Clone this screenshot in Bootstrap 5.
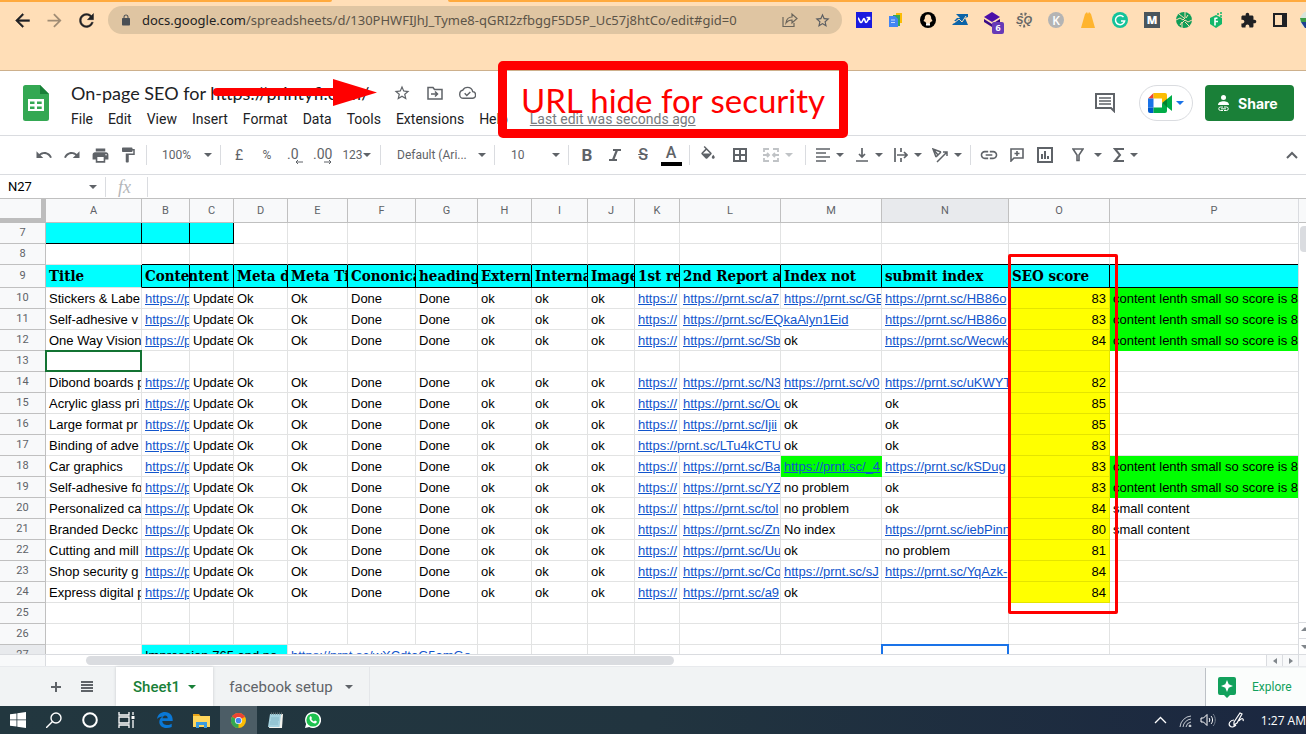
<!DOCTYPE html>
<html lang="en">
<head>
<meta charset="utf-8">
<meta name="viewport" content="width=device-width, initial-scale=1">
<title>On-page SEO - Google Sheets</title>
<link rel="stylesheet" href="https://cdn.jsdelivr.net/npm/bootstrap@5.3.0/dist/css/bootstrap.min.css">
<style>
  :root { --ink:#5f6368; --line:#dadce0; --grid:#e2e3e3; --head:#c0c0c0; --link:#1155cc; }
  body { font-family:Roboto, "Liberation Sans", sans-serif; color:#202124; background:#fff; font-size:14px; }
  button, a { color:inherit; }
  button { border:0; background:none; padding:0; }
  svg { display:block; flex:none; }
  .plain-ico { fill:currentColor; }

  .chrome-bar { background:#ffdeb7; height:71px; border-bottom:1px solid #cdb08c; }
  .strip { height:2px; }
  .strip .left-tabs { width:332px; background:#ffaa3e; border-bottom-right-radius:2px; }
  .strip .right-tabs { background:#ffaa3e; border-bottom-left-radius:2px; }
  .strip .open-tab { width:116px; }
  .nav-row { height:36px; padding-left:6px; }
  .slot { width:32px; height:28px; display:flex; align-items:center; justify-content:center; flex:none; }
  .omnibox { background:#dfc5a2; border-radius:14px; height:28px; margin:0 6px; }
  .omnibox input { border:0; background:none; outline:0; color:#5c5448; font:13px/20px "Noto Sans", sans-serif; }
  .host { color:#222; font:13px/20px "Noto Sans", sans-serif; margin-left:6px; }
  .count { right:-4px; bottom:-6px; background:#673ab7; color:#fff; font:700 9px/12px "Open Sans", sans-serif; width:12px; height:12px; border-radius:2px; }
  .avatar-slot { width:10px; height:28px; padding-left:4px; }

  .doc-head { height:65px; border-bottom:1px solid var(--line); padding-left:23px; padding-right:12px; }
  .doc-text { margin-left:22px; }
  .doc-title { font:18px/24px Lato, sans-serif; }
  .menu-row { font-size:14px; line-height:20px; gap:15px; }
  .menu-row a { text-decoration:none; }
  .edited { color:#777b80; margin-left:7px; }
  .menu-row .edited { text-decoration:underline; }
  .meet { width:54px; height:36px; border:1px solid var(--line); border-radius:18px; }
  .share-btn { width:89px; height:36px; background:#1a8038; color:#fff; border-radius:4px; font:700 14px Inter, sans-serif; }
  .strike-arrow { left:142px; top:-2px; }
  .note { left:498px; top:61px; width:350px; height:77px; border:9px solid #f00; border-radius:5px; color:#f00; font:33px/60px Lato, sans-serif; }

  .tri { width:0; height:0; border:4px solid transparent; border-top-color:currentColor; border-bottom:0; flex:none; }
  .tool-row { height:39px; border-bottom:1px solid var(--line); color:var(--ink); padding-left:30px; font-size:12px; }
  .tb { width:28px; height:28px; display:flex; align-items:center; justify-content:center; flex:none; }
  .tb.wide { width:39px; gap:6px; }
  .rule { width:1px; height:20px; background:var(--line); flex:none; margin:0 4px; }
  .pick { border:0; appearance:none; color:var(--ink); font:12px/20px Roboto, sans-serif; flex:none;
    background:url("data:image/svg+xml,%3Csvg xmlns='http://www.w3.org/2000/svg' width='8' height='4'%3E%3Cpath d='M0 0h8L4 4z' fill='%235f6368'/%3E%3C/svg%3E") no-repeat right 4px center; padding:0; }
  .pick.zoom { width:54px; margin-left:11px; }
  .pick.face { width:93px; margin-left:12px; }
  .pick.size { width:53px; margin-left:12px; }
  .tb b { font-size:17px; line-height:18px; }
  .text-color { border-bottom:4px solid #000; width:21px; font:500 16px/18px Roboto, sans-serif; height:22px; }

  .formula-row { height:23px; font-size:13px; }
  .formula-row input { border:0; outline:0; background:none; }
  .name-box { width:81px; margin-left:8px; color:#000; font:13px Roboto, sans-serif; }
  .fx { color:#b4b6b9; font:italic 18px/20px "Liberation Serif", serif; }

  .sheet-area { border-top:1px solid var(--head); min-height:0; }
  .sheet { table-layout:fixed; width:100%; border-collapse:separate; border-spacing:0; font:13px/20px "Liberation Sans", sans-serif; color:#000; }
  .sheet td, .sheet th { border:0 solid var(--grid); border-width:0 1px 1px 0; padding:0; height:21px; }
  .sheet td:last-child, .sheet thead th:last-child { border-right-width:0; }
  .sheet td > div { overflow:hidden; white-space:nowrap; padding:1px 0 0 3px; height:20px; }
  .sheet thead th { height:24px; background:#f8f9fa; border-color:var(--head); text-align:center; font:11px/23px Roboto, sans-serif; color:var(--ink); }
  .sheet thead th:last-child { padding-left:20px; }
  .sheet tbody th { background:#f8f9fa; border-color:var(--head); font:11px/20px Roboto, sans-serif; color:var(--ink); text-align:center; }
  .sheet thead th.corner { border-right:5px solid #bdbdbd; border-bottom:5px solid #bdbdbd; }
  .sheet .picked { background:#e8eaed !important; }
  .sheet a { color:var(--link); }
  .sheet .cyan { background:#0ff; }
  .sheet .lime { background:#0f0; border-color:#0f0; }
  .sheet .sun { background:#ff0; border-color:#e4e400; }
  .sheet .sun > div { text-align:right; padding-right:3px; }
  .sheet .ink { border-color:#000; }
  .sheet .ink-b { border-bottom-color:#000; }
  .sheet .ink-r { border-right-color:#000; }
  .sheet .titles td { font:700 15px/22px "DejaVu Serif Condensed", "DejaVu Serif", serif; font-stretch:condensed; height:23px; }
  .sheet .titles td > div { height:22px; padding-top:0; }
  .sheet .boxed { position:relative; }
  .sheet .boxed::after { content:""; position:absolute; inset:-1px; border:2px solid #137333; }
  .sheet .boxed.blue::after { border-color:#1a73e8; }
  .score-frame { left:1008px; top:55px; width:110px; height:360px; border:3px solid #f00; border-radius:2px; z-index:2; }
  .vbar { width:8px; border-left:1px solid var(--line); }
  .vbar .cap { height:24px; background:#f8f9fa; border-bottom:1px solid var(--head); }
  .vbar .thumb { height:26px; background:#dadce0; border-radius:4px 0 0 4px; margin:3px 0 0 1px; }
  .vbar .step { height:16px; border-top:1px solid var(--line); color:#80868b; }
  .hbar { height:13px; border-top:1px solid var(--line); border-bottom:1px solid #e8eaed; }
  .hbar .stub { width:46px; background:#f8f9fa; border-right:1px solid var(--line); }
  .hbar .thumb { width:45%; margin-left:40px; height:9px; background:#dadce0; border-radius:5px; }
  .hbar .step { width:16px; border-left:1px solid var(--line); color:#80868b; background:#f8f9fa; }
  .hbar .step.last { width:8px; }

  .tab-row { height:39px; background:#f1f3f4; color:var(--ink); padding-left:40px; }
  .tab-row .tool { width:31px; }
  .sheet-tab { font:500 15px Roboto, sans-serif; height:39px; }
  .sheet-tab.on { background:#fff; color:#188038; width:97px; margin-left:14px; box-shadow:0 0 3px #c8cacc; }
  .sheet-tab.off { width:157px; border-right:1px solid #e4e6e9; font-weight:400; }
  .explore { width:101px; border-left:1px solid #bdc1c6; background:#fbfdfc; color:#12a15c; font-size:12px; height:38px; margin-top:1px; }

  .task-row { height:28px; background:linear-gradient(90deg,#22373f,#21343f 50%,#1b2740); color:#fff; }
  .ti { width:36px; height:28px; display:flex; align-items:center; justify-content:center; flex:none; }
  .ti.view { margin-right:2px; }
  .ti.app { width:37px; }
  .ti.on { background:#4c5d66; }
  .clock { font:12px "Open Sans", sans-serif; }
</style>
</head>
<body>
<div class="d-flex flex-column vh-100 overflow-hidden position-relative">

  <header class="chrome-bar flex-shrink-0">
    <div class="strip d-flex"><div class="left-tabs"></div><div class="open-tab"></div><div class="right-tabs flex-fill"></div></div>
    <div class="nav-row d-flex align-items-center">
      <button class="slot" aria-label="Back"><svg class="plain-ico" width="21" height="21" viewBox="0 0 24 24"><path d="M20 11H7.83l5.59-5.59L12 4l-8 8 8 8 1.41-1.41L7.83 13H20v-2z" stroke="currentColor" stroke-width=".5"/></svg></button>
      <button class="slot" aria-label="Forward" style="color:#a08c74"><svg class="plain-ico" width="21" height="21" viewBox="0 0 24 24"><path d="M4 11h12.17l-5.59-5.59L12 4l8 8-8 8-1.41-1.41L16.17 13H4v-2z"/></svg></button>
      <button class="slot" aria-label="Reload"><svg class="plain-ico" width="21" height="21" viewBox="0 0 24 24"><path d="M17.65 6.35C16.2 4.9 14.21 4 12 4c-4.42 0-7.99 3.58-7.99 8s3.57 8 7.99 8c3.73 0 6.84-2.55 7.73-6h-2.08c-.82 2.33-3.04 4-5.65 4-3.31 0-6-2.69-6-6s2.69-6 6-6c1.66 0 3.14.69 4.22 1.78L13 11h7V4l-2.35 2.35z" stroke="currentColor" stroke-width=".5"/></svg></button>
      <div class="omnibox flex-fill d-flex align-items-center ps-2 pe-1">
        <svg class="mx-1" width="12" height="12" viewBox="0 0 20 24" fill="#4a4f54"><path fill-rule="evenodd" d="M16 8h-1V6c0-2.760-2.240-5-5-5S5 3.240 5 6v2H4c-1.100 0-2 .900-2 2v11c0 1.100.900 2 2 2h12c1.100 0 2-.900 2-2V10c0-1.100-.900-2-2-2zM7 8V6c0-1.660 1.340-3 3-3s3 1.340 3 3v2H7z"/></svg>
        <span class="host">docs.google.com</span>
        <input class="flex-fill p-0" type="text" aria-label="Address" value="/spreadsheets/d/130PHWFIJhJ_Tyme8-qGRI2zfbggF5D5P_Uc57j8htCo/edit#gid=0">
        <button class="slot" aria-label="Share page"><svg width="16" height="16" viewBox="0 0 16 16" fill="none" stroke="#6b655b" stroke-width="1.200"><path d="M1 5v9.500h11V11M4 11c.500-4 3-6 6-6V2l5 4.500L10 11V8C7.500 8 5.500 9 4 11z"/></svg></button>
        <button class="slot" aria-label="Bookmark"><svg width="17" height="17" viewBox="0 0 24 24" fill="#5b5e62"><path d="M22 9.240l-7.190-.620L12 2 9.190 8.630 2 9.240l5.460 4.730L5.820 21 12 17.270 18.180 21l-1.630-7.030L22 9.240zM12 15.400l-3.760 2.270 1-4.280-3.320-2.880 4.380-.380L12 6.100l1.710 4.040 4.380.380-3.320 2.880 1 4.280L12 15.400z"/></svg></button>
      </div>
      <div class="slot"><svg width="16" height="16"><path fill="#1a1adf" d="M0 0h16v16H0z"/><path d="M2 6c1 0 1.500 4.500 3 4.500S7 6.500 8 6.500s1 4 2 4 1.500-2 3.500-5M10.500 5.500h3V8" fill="none" stroke="#fff" stroke-width="1.600"/></svg></div>
      <div class="slot"><svg width="16" height="16"><path fill="#fbbc04" d="M8 1h6v10H8z"/><path fill="#34a853" d="M5 3h7v11H5z"/><path fill="#4285f4" d="M1 4h6l3 3v8H1z"/><path d="M3 8h4M3 10.500h4" stroke="#c5dafc"/></svg></div>
      <div class="slot"><svg width="16" height="16"><circle cx="8" cy="8" r="8"/><path fill="#ffdeb7" d="M8 2.500c2.500 0 3.300 1.800 3.200 4l1.300 2.500-2 1-1 2h-3l-1-2-2-1 1.300-2.500c-.100-2.200.700-4 3.200-4z"/><path d="M6 12.500h4" stroke="#fff" stroke-width="2"/></svg></div>
      <div class="slot"><svg width="16" height="16"><path fill="#0b63a8" d="M4 2h12v3l-3 1 3 7H0l4-4H2l3-3h3z"/><path d="M2 11l5-4 3 3 4-6" stroke="#ffdeb7" fill="none"/></svg></div>
      <div class="slot"><div class="position-relative"><svg width="16" height="16"><path fill="#4b0fa8" d="M8 0l8 5-8 5-8-5z"/><path fill="#3a0b86" d="M0 7l8 5 8-5v3l-8 5-8-5z"/></svg><span class="count position-absolute text-center">6</span></div></div>
      <div class="slot"><svg width="18" height="18" viewBox="0 0 18 18"><circle cx="9" cy="9" r="6" fill="none" stroke="#6b6b6b" stroke-width="3" stroke-dasharray="2 2"/><text x="9" y="13" font-family="Liberation Sans" font-weight="700" font-style="italic" font-size="11" text-anchor="middle" fill="#666" stroke="#ffdeb7" stroke-width="2" paint-order="stroke">SQ</text></svg></div>
      <div class="slot"><svg width="16" height="16"><circle cx="8" cy="8" r="8" fill="#b4b4b4"/><text x="8" y="12.500" font-family="Open Sans" font-weight="600" font-size="12" text-anchor="middle" fill="#fff">K</text></svg></div>
      <div class="slot"><svg width="16" height="16"><path fill="#ffb42e" d="M1 16L5 2l2-2 1 2 1-2 2 2 4 14z"/></svg></div>
      <div class="slot"><svg width="16" height="16"><circle cx="8" cy="8" r="8" fill="#15c39a"/><path d="M11.500 5A4.600 4.600 0 1 0 12.600 9H9" fill="none" stroke="#fff" stroke-width="1.500"/></svg></div>
      <div class="slot"><svg width="16" height="16"><path fill="#4a555c" d="M0 0h16v16H0z"/><text x="8" y="12" font-family="Open Sans" font-weight="800" font-size="11" text-anchor="middle" fill="#fff">M</text></svg></div>
      <div class="slot"><svg width="16" height="16"><circle cx="8" cy="8" r="8" fill="#0f9d58"/><path d="M0 8l4-2 3 2 2-2V0M16 8l-4 2-3-2-3 3v5M3 2l5 4M13 14l-4-4M12 3l-2 3M4 13l2-3" fill="none" stroke="#ffdeb7"/></svg></div>
      <div class="slot"><svg width="16" height="16"><path fill="#12b76a" d="M2 6l6-3 6 3v6l-6 4-6-4z"/><path d="M9.500 6L7 6.500v7M7 9.500h3" fill="none" stroke="#fff" stroke-width="1.600"/><path d="M9 2h2M12 1h2M12 4h2" stroke="#12b76a" stroke-width="1.500"/></svg></div>
      <div class="slot"><svg class="plain-ico" width="17" height="17" viewBox="0 0 24 24"><path d="M20.500 11H19V7c0-1.100-.900-2-2-2h-4V3.500C13 2.120 11.880 1 10.500 1S8 2.120 8 3.500V5H4c-1.100 0-1.990.900-1.990 2v3.800H3.500c1.490 0 2.700 1.210 2.700 2.700s-1.210 2.700-2.700 2.700H2V20c0 1.100.900 2 2 2h3.800v-1.500c0-1.490 1.210-2.700 2.700-2.700 1.490 0 2.700 1.210 2.700 2.700V22H17c1.100 0 2-.900 2-2v-4h1.500c1.380 0 2.500-1.120 2.500-2.500S21.880 11 20.500 11z"/></svg></div>
      <div class="slot"><svg width="14" height="14"><path fill="none" stroke="#202124" stroke-width="2" d="M1 1h12v12H1z"/><path fill="#202124" d="M9 1h4v12H9z"/></svg></div>
      <div class="avatar-slot d-flex align-items-center overflow-hidden"><svg width="18" height="18"><circle cx="9" cy="9" r="9" fill="#d8e4dc"/><path d="M0 7h18v4H1z" fill="#3b9b45"/><path d="M1 11h16l-4 6H5z" fill="#1e3f8f"/></svg></div>
    </div>
  </header>

  <section class="doc-head d-flex align-items-center flex-shrink-0">
    <svg width="26" height="36" viewBox="0 0 26 36"><path fill="#34a853" d="M2.500 0H17l9 9v24.500a2.500 2.500 0 0 1-2.500 2.500h-21A2.500 2.500 0 0 1 0 33.500v-31A2.500 2.500 0 0 1 2.500 0z"/><path fill="#188038" d="M17 0l9 9h-9z"/><path fill="#fff" fill-rule="evenodd" d="M5 14h16v12H5zM7 16.500v2.500h4.500v-2.500zM14 16.500v2.500h4.700v-2.500zM7 21.500v2.500h4.500v-2.500zM14 21.500v2.500h4.700v-2.500z"/></svg>
    <div class="doc-text pt-1">
      <div class="d-flex align-items-center">
        <div class="doc-title position-relative text-nowrap">On-page SEO for https://printyfi.com/
          <svg class="strike-arrow position-absolute" width="164" height="28" fill="#f00"><rect y="9" width="126" height="8" rx="4"/><path d="M120 0l44 13.500L120 27z"/></svg>
        </div>
        <div class="d-flex gap-3 ps-4" style="color:#5f6368">
          <svg class="plain-ico" width="18" height="18" viewBox="0 0 24 24"><path d="M22 9.240l-7.190-.620L12 2 9.190 8.630 2 9.240l5.460 4.730L5.820 21 12 17.270 18.180 21l-1.630-7.030L22 9.240zM12 15.400l-3.760 2.270 1-4.280-3.320-2.880 4.380-.380L12 6.100l1.710 4.040 4.380.380-3.320 2.880 1 4.280L12 15.400z"/></svg>
          <svg width="16" height="18" viewBox="0 0 16 18" fill="none" stroke="currentColor" stroke-width="1.500"><path d="M1 3.500h5l1.500 2H15V15H1zM4 10h6M8 7.500l2.500 2.500L8 12.500"/></svg>
          <svg width="17" height="18" viewBox="0 0 24 24" fill="none" stroke="currentColor" stroke-width="2"><path d="M19.350 10.040C18.670 6.590 15.640 4 12 4 9.110 4 6.600 5.640 5.350 8.040 2.800 8.400 1 10.910 1 14c0 3 2.300 5.500 5 5.500h13c2.300 0 4.500-2 4.500-4.500 0-2.640-1.800-4.800-4.150-4.960zM8 12.500l3 3 5-5"/></svg>
        </div>
      </div>
      <nav class="menu-row d-flex mt-1">
        <a href="#">File</a><a href="#">Edit</a><a href="#">View</a><a href="#">Insert</a><a href="#">Format</a><a href="#">Data</a><a href="#">Tools</a><a href="#">Extensions</a><a href="#">Help</a>
        <a href="#" class="edited">Last edit was seconds ago</a>
      </nav>
    </div>
    <div class="ms-auto d-flex align-items-center">
      <button class="me-4" aria-label="Comments"><svg width="20" height="20" viewBox="0 0 20 20" fill="none" stroke="#5f6368" stroke-width="2"><path d="M1 1h18v17l-3-3H1z"/><path d="M4 5h12M4 8h12M4 11h12" stroke-width="1.500"/></svg></button>
      <button class="meet d-flex align-items-center justify-content-center gap-1 me-2" aria-label="Meet" style="color:#1a73e8">
        <svg width="24" height="20" viewBox="0 0 24 20"><path fill="#ea4335" d="M0 5.500L5.500 0v5.500z"/><path fill="#fbbc04" d="M5.500 0H17a2 2 0 0 1 2 2v5l-5 3V5.500H5.500z"/><path fill="#1a73e8" d="M0 5.500h5.500v9H0z"/><path fill="#0059c9" d="M0 14.500h5.500V20H2a2 2 0 0 1-2-2z"/><path fill="#00ac47" d="M5.500 14.500H14V10l5 3v5a2 2 0 0 1-2 2H5.500z"/><path fill="#00832d" d="M14 10l5-4v8z"/><path fill="#00ac47" d="M19 6l5-4v16l-5-4z"/></svg>
        <span class="tri"></span>
      </button>
      <button class="share-btn d-flex align-items-center gap-2 ps-2 ms-1"><svg class="ms-1" width="13" height="17" viewBox="0 0 13 17" fill="#fff"><circle cx="6.500" cy="2.500" r="2.500"/><path d="M1 10c0-3 3-3.800 5.500-3.800S12 7 12 10z"/><path d="M6 12H3.500a1.700 1.700 0 0 0 0 3.500H6M7 12h2.500a1.700 1.700 0 0 1 0 3.500H7M4 13.800h5" fill="none" stroke="#fff"/></svg>Share</button>
    </div>
  </section>

  <div class="tool-row d-flex align-items-center flex-shrink-0" role="toolbar">
    <button class="tb" aria-label="Undo"><svg class="plain-ico" width="18" height="18" viewBox="0 0 24 24"><path d="M12.500 8c-2.650 0-5.050.990-6.900 2.600L2 7v9h9l-3.620-3.620c1.390-1.160 3.160-1.880 5.120-1.880 3.540 0 6.550 2.310 7.600 5.500l2.370-.780C21.080 11.030 17.150 8 12.500 8z"/></svg></button>
    <button class="tb" aria-label="Redo"><svg class="plain-ico" width="18" height="18" viewBox="0 0 24 24"><path d="M18.400 10.600C16.550 8.990 14.150 8 11.500 8c-4.650 0-8.580 3.030-9.960 7.220L3.900 16c1.050-3.190 4.050-5.500 7.600-5.500 1.950 0 3.730.720 5.120 1.880L13 16h9V7l-3.600 3.600z"/></svg></button>
    <button class="tb" aria-label="Print"><svg class="plain-ico" width="19" height="19" viewBox="0 0 24 24"><path d="M19 8H5c-1.660 0-3 1.340-3 3v6h4v4h12v-4h4v-6c0-1.660-1.340-3-3-3zm-3 11H8v-5h8v5zm3-7c-.550 0-1-.450-1-1s.450-1 1-1 1 .450 1 1-.450 1-1 1zm-1-9H6v4h12V3z"/></svg></button>
    <button class="tb" aria-label="Paint format"><svg class="plain-ico" width="18" height="18" viewBox="0 0 24 24"><path d="M18 4V3c0-.550-.450-1-1-1H5c-.550 0-1 .450-1 1v4c0 .550.450 1 1 1h12c.550 0 1-.450 1-1V6h1v4H9v11c0 .550.450 1 1 1h2c.550 0 1-.450 1-1v-9h8V4h-3z"/></svg></button>
    <span class="rule"></span>
    <select class="pick zoom" aria-label="Zoom"><option>100%</option></select>
    <span class="rule"></span>
    <button class="tb" aria-label="Currency"><span style="font-size:14px">£</span></button>
    <button class="tb">%</button>
    <button class="tb" aria-label="Fewer decimals"><svg width="18" height="18"><text x="1" y="13" font-size="14" fill="currentColor">.0</text><path d="M17 16h-7M12 14l-2 2 2 2" fill="none" stroke="currentColor"/></svg></button>
    <button class="tb" aria-label="More decimals"><svg width="20" height="18"><text x="0" y="13" font-size="14" fill="currentColor">.00</text><path d="M11 16h7M16 14l2 2-2 2" fill="none" stroke="currentColor"/></svg></button>
    <button class="tb wide" aria-label="More formats"><span class="d-flex align-items-center">123<span class="tri"></span></span></button>
    <span class="rule"></span>
    <select class="pick face" aria-label="Font"><option>Default (Ari...</option></select>
    <span class="rule"></span>
    <select class="pick size" aria-label="Font size"><option>10</option></select>
    <span class="rule"></span>
    <button class="tb" aria-label="Bold"><b>B</b></button>
    <button class="tb" aria-label="Italic"><svg width="12" height="12" fill="none" stroke="currentColor" stroke-width="2.200"><path d="M4 1h8M0 11h8M8 1L4 11"/></svg></button>
    <button class="tb" aria-label="Strikethrough"><s style="font:500 16px/18px Roboto">S</s></button>
    <button class="tb" aria-label="Text colour"><span class="text-color">A</span></button>
    <span class="rule"></span>
    <button class="tb" aria-label="Fill colour"><svg class="plain-ico" width="18" height="18" viewBox="0 0 24 24"><path d="M16.560 8.940L7.620 0 6.210 1.410l2.380 2.380-5.150 5.150c-.590.590-.590 1.540 0 2.120l5.500 5.500c.290.290.680.440 1.060.440s.770-.150 1.060-.440l5.500-5.500c.590-.580.590-1.530 0-2.120zM5.210 10L10 5.210 14.790 10H5.210zM19 11.500s-2 2.170-2 3.500c0 1.100.900 2 2 2s2-.900 2-2c0-1.330-2-3.500-2-3.500z"/></svg></button>
    <button class="tb ms-1" aria-label="Borders"><svg width="14" height="14" fill="none" stroke="currentColor" stroke-width="2"><path d="M1 1h12v12H1zM7 1v12M1 7h12"/></svg></button>
    <button class="tb wide ms-1" aria-label="Merge cells" style="color:#c0c3c6"><svg width="16" height="14" fill="none" stroke="currentColor" stroke-width="1.800"><path d="M6 1H1v3M1 10v3h5M10 1h5v3M15 10v3h-5M0 7h6M16 7h-6M4 5l2 2-2 2M12 5l-2 2 2 2"/></svg><span class="tri"></span></button>
    <span class="rule ms-2"></span>
    <button class="tb wide" aria-label="Horizontal align"><svg width="14" height="14" stroke="currentColor" stroke-width="1.700"><path d="M0 1h14M0 5h10M0 9h14M0 13h10"/></svg><span class="tri"></span></button>
    <button class="tb wide" aria-label="Vertical align"><svg width="14" height="16" fill="none" stroke="currentColor" stroke-width="1.700"><path d="M1 14h12M7 1v9M4 7l3 3 3-3"/></svg><span class="tri"></span></button>
    <button class="tb wide" aria-label="Wrap"><svg width="14" height="16" fill="none" stroke="currentColor" stroke-width="1.700"><path d="M1 1v14M7 1v4M7 11v4M3 8h10M10 5l3 3-3 3"/></svg><span class="tri"></span></button>
    <button class="tb wide" aria-label="Rotate"><svg width="16" height="15" fill="none" stroke="currentColor" stroke-width="1.500"><path d="M4 9L1 1l8 3M1 1l5 6M5 14L15 4M11 4h4v4M4 9l5-5"/></svg><span class="tri"></span></button>
    <span class="rule"></span>
    <button class="tb" aria-label="Link"><svg class="plain-ico" width="20" height="20" viewBox="0 0 24 24"><path d="M3.900 12c0-1.710 1.390-3.100 3.100-3.100h4V7H7c-2.760 0-5 2.240-5 5s2.240 5 5 5h4v-1.900H7c-1.710 0-3.100-1.390-3.100-3.100zM8 13h8v-2H8v2zm9-6h-4v1.900h4c1.710 0 3.100 1.390 3.100 3.100s-1.390 3.100-3.100 3.100h-4V17h4c2.760 0 5-2.240 5-5s-2.240-5-5-5z"/></svg></button>
    <button class="tb" aria-label="Comment"><svg width="14" height="14" fill="none" stroke="currentColor" stroke-width="1.600"><path d="M1 13V1h12v9H4zM7 3v5M4.500 5.500h5"/></svg></button>
    <button class="tb" aria-label="Chart"><svg width="16" height="16" fill="none" stroke="currentColor" stroke-width="2"><path d="M1 1h14v14H1zM5 7v5M8 4v8M11 9v3"/></svg></button>
    <button class="tb wide ms-2" aria-label="Filter"><svg width="12" height="14" fill="none" stroke="currentColor" stroke-width="1.600"><path d="M1 1h10L7 7v5.500H5V7z"/></svg><span class="tri ms-1"></span></button>
    <button class="tb wide" aria-label="Functions"><svg width="11" height="14" fill="none" stroke="currentColor" stroke-width="2"><path d="M11 1H2l5 6-5 6h9"/></svg><span class="tri"></span></button>
    <button class="tb ms-auto" aria-label="Hide menus"><svg width="12" height="8" fill="none" stroke="currentColor" stroke-width="2"><path d="M1 7l5-5 5 5"/></svg></button>
  </div>

  <div class="formula-row d-flex align-items-center flex-shrink-0">
    <input class="name-box p-0" type="text" aria-label="Name box" value="N27">
    <span class="tri" style="color:#5f6368"></span>
    <span class="rule me-0 ms-2"></span>
    <span class="fx ps-2 ms-1">fx</span>
    <span class="rule ms-3"></span>
    <input class="flex-fill" type="text" aria-label="Formula">
  </div>

  <main class="sheet-area d-flex flex-fill position-relative overflow-hidden">
    <div class="flex-fill overflow-hidden">
      <table class="sheet">
        <colgroup id="cols"></colgroup>
        <thead><tr id="letters"></tr></thead>
        <tbody id="cells"></tbody>
      </table>
    </div>
    <div class="vbar d-flex flex-column flex-shrink-0 overflow-hidden">
      <div class="cap"></div><div class="thumb"></div>
      <div class="step mt-auto"><svg width="7" height="15"><path d="M2 8l4-4 4 4z" fill="currentColor"/></svg></div>
      <div class="step"><svg width="7" height="15"><path d="M2 6l4 4 4-4z" fill="currentColor"/></svg></div>
    </div>
    <div class="score-frame position-absolute"></div>
  </main>

  <div class="hbar d-flex flex-shrink-0">
    <div class="stub"></div><div class="thumb align-self-center"></div>
    <div class="step ms-auto d-flex align-items-center justify-content-center"><svg width="4" height="6"><path d="M4 0v6L0 3z" fill="currentColor"/></svg></div>
    <div class="step d-flex align-items-center justify-content-center"><svg width="4" height="6"><path d="M0 0v6l4-3z" fill="currentColor"/></svg></div>
    <div class="step last"></div>
  </div>

  <footer class="tab-row d-flex flex-shrink-0">
    <button class="tool" aria-label="Add sheet"><svg class="mx-auto" width="10" height="10" stroke="currentColor" stroke-width="2"><path d="M5 0v10M0 5h10"/></svg></button>
    <button class="tool" aria-label="All sheets"><svg class="mx-auto" width="12" height="12" stroke="currentColor" stroke-width="2"><path d="M0 1h12M0 4h12M0 7h12M0 10h12"/></svg></button>
    <button class="sheet-tab on d-flex align-items-center justify-content-center gap-2">Sheet1 <span class="tri"></span></button>
    <button class="sheet-tab off d-flex align-items-center justify-content-center gap-2">facebook setup <span class="tri ms-1"></span></button>
    <button class="explore ms-auto d-flex align-items-center gap-3 ps-2"><svg class="ms-1" width="18" height="21"><path fill="#12a15c" d="M2 0h14a2 2 0 0 1 2 2v14a2 2 0 0 1-2 2h-4l-3 3-3-3H2a2 2 0 0 1-2-2V2a2 2 0 0 1 2-2z"/><path fill="#fff" d="M9 3l1.700 4.300L15 9l-4.300 1.700L9 15l-1.700-4.300L3 9l4.300-1.700z"/></svg>Explore</button>
  </footer>

  <div class="task-row d-flex align-items-center flex-shrink-0">
    <button class="ti" aria-label="Start"><svg width="16" height="16" fill="#fff"><path d="M0 2.300l6.500-.900v6.100H0zM7.300 1.300L16 0v7.500H7.300zM0 8.300h6.500v6.300L0 13.700zM7.300 8.300H16V16l-8.700-1.200z"/></svg></button>
    <button class="ti" aria-label="Search"><svg width="16" height="16" fill="none" stroke="#fff" stroke-width="1.400"><circle cx="10" cy="6" r="5"/><path d="M6.500 9.500L0 16"/></svg></button>
    <button class="ti" aria-label="Cortana"><svg width="16" height="16" fill="none" stroke="#fff" stroke-width="2"><circle cx="8" cy="8" r="6.800"/></svg></button>
    <button class="ti view" aria-label="Task view"><svg width="17" height="16" fill="none" stroke="#fff" stroke-width="1.300"><path d="M1 0v3h10V0M1 16v-3h10v3M1 5h10v6H1zM15 0v3M15 8v8"/><path d="M13.500 4h3v3h-3z" fill="#fff" stroke="none"/></svg></button>
    <button class="ti app" aria-label="Edge"><svg width="16" height="16"><path fill="#0a78d6" d="M0 7C.600 2.500 4 0 8 0c5 0 8 3.500 7.700 9H5.300c.200 3 2.700 4 5 4 1.700 0 3-.400 4.400-1.200V15c-1.500.700-3.300 1-5 1C5 16 2.300 13.300 2.300 10c0-2.500 1.400-4.500 3.500-5.600C3.500 4.600 1.300 5.500 0 7zM5.500 6.300h5.200C10.700 4.500 9.800 3.400 8.200 3.400 6.600 3.400 5.700 4.800 5.500 6.300z"/></svg></button>
    <button class="ti app" aria-label="Files"><svg width="17" height="15"><path fill="#e8a317" d="M0 1h6l1.500 2H0z"/><path fill="#ffd65c" d="M0 3h17v11H0z"/><path fill="#3a9be0" d="M3 15V9h11v6h-3v-3H6v3z"/></svg></button>
    <button class="ti app on" aria-label="Chrome"><svg width="15" height="15" viewBox="0 0 16 16"><circle cx="8" cy="8" r="8" fill="#fbbc04"/><path fill="#ea4335" d="M8 8L1.070 4A8 8 0 0 1 14.930 4z"/><path fill="#34a853" d="M8 8v8A8 8 0 0 1 1.070 4z"/><circle cx="8" cy="8" r="3.800" fill="#fff"/><circle cx="8" cy="8" r="3" fill="#4285f4"/></svg></button>
    <button class="ti app" aria-label="Notepad"><svg width="15" height="17"><path fill="#f3f3ee" d="M3 2h12l-1 14H1z"/><path fill="#a5d2df" d="M2 2h11l-1.500 13H0z"/><path d="M3 1.500h11" stroke="#5e6e73" stroke-width="2" stroke-dasharray="1 1"/><path d="M3 6h8M3 8h8M2 10h8M2 12h8" stroke="#7db2c2" stroke-width=".8"/></svg></button>
    <button class="ti app" aria-label="WhatsApp"><svg width="16" height="16"><path fill="#fff" d="M8 0a8 8 0 1 1-3.800 15L0 16l1.100-4A8 8 0 0 1 8 0z"/><circle cx="8" cy="8" r="6.600" fill="#1ec14f"/><path fill="#fff" d="M5 4.500c1-.800 1.500.300 1.900 1.500.100.500-.700.800-.500 1.200.600 1 1.300 1.700 2.400 2.200.500.200.800-1 1.300-.800 1.600.700 2 .900 1.500 2-1 1.500-3 1-5-.500C4.800 8.600 3.800 6 5 4.500z"/></svg></button>
    <div class="ms-auto d-flex align-items-center gap-2">
      <svg class="me-1" width="13" height="8" fill="none" stroke="#fff" stroke-width="1.300"><path d="M1 7l5.500-5.500L12 7"/></svg>
      <svg width="13" height="13" fill="none" stroke="#c7ccd3"><path d="M1 13A12 12 0 0 1 12 2M4 13a9 9 0 0 1 8-8M7 13a6 6 0 0 1 5-5"/><circle cx="11" cy="12" r="1" fill="#fff"/></svg>
      <svg width="16" height="14" fill="none" stroke="#fff"><path d="M1 5h2.500L7 1.500v11L3.500 9H1zM9 5c1 1 1 3 0 4M11 3c2 2 2 6 0 8"/><path d="M13 1c3 3 3 9 0 12" stroke="#76808e"/></svg>
      <svg class="ms-1 me-2" width="17" height="16" fill="none" stroke="#fff" stroke-width="1.200"><path d="M6 10L12 1l2 1-5 9-3 2zM6 8C2 8 0 12 2 14s5 0 6-1M11 9c3-4 5-2 4 0"/></svg>
      <span class="clock text-nowrap">1:27 AM</span>
    </div>
  </div>

  <div class="note position-absolute text-center text-nowrap">URL hide for security</div>
</div>

<script src="https://cdn.jsdelivr.net/npm/bootstrap@5.3.0/dist/js/bootstrap.bundle.min.js"></script>
<script>
  // Column letters with their widths; the last one takes what is left.
  const columns = [["", 46], ["A", 96], ["B", 48], ["C", 44], ["D", 54], ["E", 60], ["F", 68], ["G", 62], ["H", 54],
    ["I", 56], ["J", 47], ["K", 45], ["L", 101], ["M", 101], ["N", 127], ["O", 101], ["P", 0]];
  cols.innerHTML = columns.map(c => c[1] ? `<col style="width:${c[1]}px">` : "<col>").join("");
  letters.innerHTML = columns.map(c => `<th class="${c[0] === "" ? "corner" : c[0] === "N" ? "picked" : ""}">${c[0]}</th>`).join("");

  const td = (text = "", cls = "", span = 1) => {
    const inner = text.startsWith("https") ? `<a href="#">${text}</a>` : text;
    return `<td class="${cls}"${span > 1 ? ` colspan="${span}"` : ""}><div>${inner}</div></td>`;
  };
  const blanks = n => td().repeat(n);
  const row = (n, body, cls = "", head = "") => `<tr class="${cls}"><th class="${head}">${n}</th>${body}</tr>`;

  // row number, title, 2nd report, index, submit, score, remark, remark colour
  const p = "https://prnt.sc/", small = "content lenth small so score is 8";
  const pages = [
    [10, "Stickers &amp; Labe", p + "a7", p + "GB", p + "HB86o", 83, small, 1],
    [11, "Self-adhesive v", p + "EQkaAlyn1Eid", null, p + "HB86o", 83, small, 1],
    [12, "One Way Vision", p + "Sb", "ok", p + "Wecwk", 84, small, 1],
    [13],
    [14, "Dibond boards p", p + "N3", p + "v0", p + "uKWYT", 82, ""],
    [15, "Acrylic glass pri", p + "Ou", "ok", "ok", 85, ""],
    [16, "Large format pr", p + "Ijii", "ok", "ok", 85, ""],
    [17, "Binding of adve", null, "ok", "ok", 83, ""],
    [18, "Car graphics", p + "Ba", p + "_4", p + "kSDug", 83, small, 1],
    [19, "Self-adhesive fo", p + "YZ", "no problem", "ok", 83, small, 1],
    [20, "Personalized ca", p + "tol", "no problem", "ok", 84, "small content"],
    [21, "Branded Deckc", p + "Zn", "No index", p + "iebPinn", 80, "small content"],
    [22, "Cutting and mill", p + "Uu", "ok", "no problem", 81, ""],
    [23, "Shop security g", p + "Co", p + "sJ", p + "YqAzk-", 84, ""],
    [24, "Express digital p", p + "a9", "ok", "", 84, ""]
  ];
  const titles = ["Meta d", "Meta Ti", "Cononica", "heading", "Extern", "Interna", "Image", "1st re", "2nd Report a", "Index not", "submit index", "SEO score", ""];

  let html = row(7, td("", "cyan ink").repeat(3) + blanks(13));
  html += row(8, td() + td("", "ink-b").repeat(15));
  html += row(9, td("Title", "cyan ink-r") + td("Conten", "cyan ink") +
    `<td class="cyan ink"><div class="d-flex justify-content-end pe-1">ntent</div></td>` +
    titles.map(t => td(t, "cyan ink")).join(""), "titles");
  for (const [n, title, second, index, submit, score, remark, green] of pages) {
    if (n === 13) { html += row(n, td("", "boxed") + blanks(13) + td("", "sun") + td()); continue; }
    let body = td(title) + td("https://p") + td("Update") + td("Ok") + td("Ok") + td("Done") + td("Done") + td("ok").repeat(3);
    body += second === null ? td(p + "LTu4kCTU", "", 2) : td("https://") + td(second, "", index === null ? 2 : 1);
    if (index !== null) body += td(index, n === 18 ? "lime" : "");
    body += td(submit) + td(String(score), "sun") + td(remark, green ? "lime" : "");
    html += row(n, body);
  }
  html += row(25, blanks(16)) + row(26, blanks(16));
  html += row(27, td() + td("Impression 765 and no", "cyan", 3) + td(p + "wXCdtaG5amGo", "", 3) + blanks(6) + td("", "boxed blue") + blanks(2), "", "picked");
  cells.innerHTML = html;
</script>
</body>
</html>
